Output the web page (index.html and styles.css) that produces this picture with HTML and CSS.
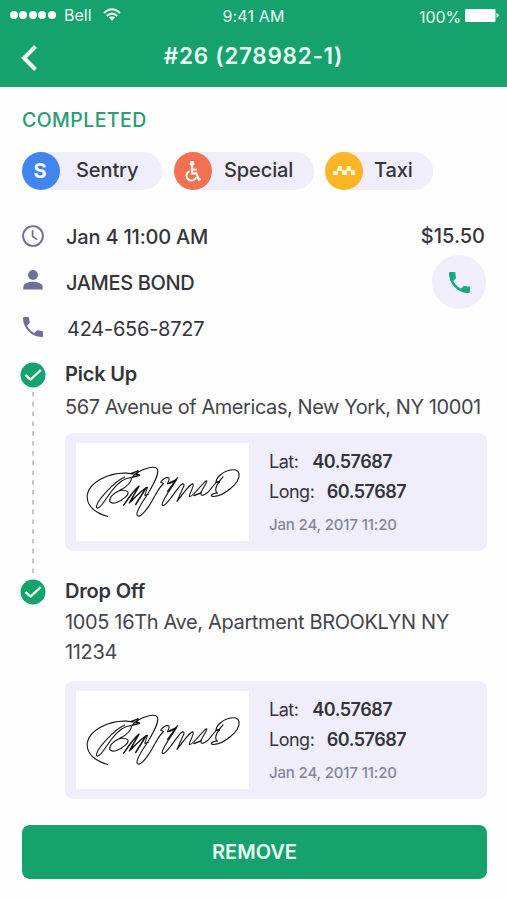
FILE: index.html
```html
<!DOCTYPE html>
<html lang="en">
<head>
<meta charset="utf-8">
<title>Trip #26</title>
<link rel="stylesheet" href="styles.css">
</head>
<body>
<svg class="defs" aria-hidden="true">
  <symbol id="phone" viewBox="3 3 18 18"><path d="M6.62 10.79c1.44 2.83 3.76 5.14 6.59 6.59l2.2-2.2c.27-.27.67-.36 1.02-.24 1.12.37 2.33.57 3.57.57.55 0 1 .45 1 1V20c0 .55-.45 1-1 1-9.39 0-17-7.61-17-17 0-.55.45-1 1-1h3.5c.55 0 1 .45 1 1 0 1.25.2 2.45.57 3.57.11.35.03.74-.25 1.02l-2.2 2.2z"/></symbol>
  <symbol id="check" viewBox="0 0 26 26"><circle cx="13" cy="13" r="12.5" fill="#16a26c"/><path d="M5.400 12.800 L10.500 17.700 L20.800 8" fill="none" stroke="#effff8" stroke-width="2.4"/></symbol>
  <symbol id="signature" viewBox="50 55 519 291">
    <g fill="none" stroke="#151515" stroke-width="3.3" stroke-linecap="round" stroke-linejoin="round">
      <path d="M145 274 C107 263 80 241 84 208 C90 173 147 141 202 144 L232 148"/>
      <path d="M196 156 C168 165 107 232 112 247 C118 258 142 218 158 196 C173 177 192 158 215 157 C220 165 205 186 180 196 C205 192 215 202 198 216 C180 232 158 240 151 228 C150 214 168 201 182 196"/>
      <path d="M222 152 C244 131 282 121 293 130 C302 143 284 174 270 198 C254 226 230 254 233 269 C240 282 256 261 271 239 C287 215 297 187 313 175 L304 171 C308 164 319 155 328 158 C334 164 320 176 326 176 C340 173 351 163 355 157 C344 180 303 229 309 240 C317 248 340 208 364 180 C374 171 377 178 370 190 L353 229 C367 211 390 177 400 176 C408 180 390 203 390 214 C400 217 420 184 440 167 C448 164 434 184 425 201 C422 217 438 210 449 198 L470 172"/>
    </g>
    <g fill="none" stroke="#151515" stroke-width="4.400" stroke-linecap="round" stroke-linejoin="round">
      <path d="M216 145 L236 137 L232 146 L241 150 L218 156"/>
      <path d="M193 240 C208 218 228 192 239 183 L210 233 C224 220 241 201 261 187 L229 238"/>
      <path d="M265 186 L256 211 L268 207" stroke-width="3"/>
      <path d="M328 174 L350 164 L325 199 M404 211 L425 203 M470 171 L480 170" />
      <path d="M491 155 C477 169 461 194 474 204 C462 202 449 213 461 214 C490 215 544 174 539 146 C535 126 496 131 475 158 C469 166 468 175 480 172" stroke-width="3.500"/>
    </g>
  </symbol>
</svg>

<header class="header">
  <div class="status">
    <div class="carrier">
      <span class="dots"><i></i><i></i><i></i><i></i><i></i></span>
      <span class="bell">Bell</span>
      <svg class="wifi" viewBox="0 0 18 13"><g fill="none" stroke="#e9fff5" stroke-width="2"><path d="M1 5 Q9 -2.4 17 5"/><path d="M3.8 8 Q9 3.2 14.2 8"/></g><path d="M5.8 9.5 Q9 6.9 12.2 9.5 L9 12.8Z" fill="#e9fff5"/></svg>
    </div>
    <span class="time">9:41 AM</span>
    <div class="power">
      <span class="percent">100%</span>
      <svg class="battery" viewBox="0 0 34 14"><rect width="30.5" height="13" rx="1.5" fill="#fff"/><path d="M31.5 4 Q36 6.5 31.5 9Z" fill="#fff"/></svg>
    </div>
  </div>
  <div class="nav">
    <svg class="back" viewBox="0 0 18 28"><path d="M15.500 2.5 L4 14 L15.500 25.5" fill="none" stroke="#f2fff9" stroke-width="4"/></svg>
    <h1 class="title">#26 (278982-1)</h1>
    <span></span>
  </div>
</header>

<main class="main">
  <div class="state">COMPLETED</div>
  <div class="tags">
    <div class="tag tag-sentry"><span class="badge blue">S</span><span class="label">Sentry</span></div>
    <div class="tag tag-special"><span class="badge orange"><svg class="chair" viewBox="0 0 18 22"><circle cx="8" cy="2.6" r="2.5" fill="#fff"/><g fill="none" stroke="#fff" stroke-width="2"><path d="M8 5 V13 H12.5 L15 19.5 L17 18.7" stroke-width="2.4"/><path d="M8 9 H13"/><path d="M5.3 10.5 A5.2 5.2 0 1 0 12.3 17"/></g></svg></span><span class="label">Special</span></div>
    <div class="tag tag-taxi"><span class="badge yellow"><svg class="checker" viewBox="0 0 22 10"><path fill="#fff6d8" d="M0 5h4v-2.5h1v-2.5h4v4h4v-1.500h1v-2.500h4v4h4v5h-4v-4h-4v4h-5v-4h-4v4h-5z"/></svg></span><span class="label">Taxi</span></div>
  </div>

  <section class="info">
    <div class="facts">
      <div class="fact"><svg class="clock" viewBox="0 0 22 22"><g fill="none" stroke="#706f9a"><circle cx="11" cy="11" r="9.9" stroke-width="1.9"/><path d="M10.600 5.200V11.500L15.200 14.600" stroke-width="1.700"/></g></svg><span class="date">Jan 4 11:00 AM</span></div>
      <div class="fact"><svg class="person" viewBox="0 0 20 20"><circle cx="10" cy="5" r="4.900"/><path d="M0.300 19.500V17C0.300 13.400 6 11.800 10 11.800S19.700 13.400 19.700 17V19.500Z"/></svg><span class="name">JAMES BOND</span></div>
      <div class="fact"><svg class="tel"><use href="#phone"/></svg><span class="number">424-656-8727</span></div>
    </div>
    <div class="side">
      <span class="price">$15.50</span>
      <div class="call"><svg><use href="#phone"/></svg></div>
    </div>
  </section>

  <section class="stop">
    <div class="rail"><svg class="mark"><use href="#check"/></svg><svg class="line" viewBox="0 0 2 182"><path d="M1 0V182" stroke="#c6c6cc" stroke-width="2" stroke-dasharray="4.600 5.200"/></svg></div>
    <div class="body">
      <h2 class="pick">Pick Up</h2>
      <p class="addr one">567 Avenue of Americas, New York, NY 10001</p>
      <div class="card">
        <div class="sign"><svg><use href="#signature"/></svg></div>
        <div class="coords">
          <div class="coord"><span class="lat">Lat:</span><b>40.57687</b></div>
          <div class="coord"><span class="long">Long:</span><b>60.57687</b></div>
          <div class="stamp">Jan 24, 2017 11:20</div>
        </div>
      </div>
    </div>
  </section>

  <section class="stop last">
    <div class="rail"><svg class="mark"><use href="#check"/></svg></div>
    <div class="body">
      <h2 class="drop">Drop Off</h2>
      <p class="addr two">1005 16Th Ave, Apartment BROOKLYN NY<br>11234</p>
      <div class="card">
        <div class="sign"><svg><use href="#signature"/></svg></div>
        <div class="coords">
          <div class="coord"><span class="lat">Lat:</span><b>40.57687</b></div>
          <div class="coord"><span class="long">Long:</span><b>60.57687</b></div>
          <div class="stamp">Jan 24, 2017 11:20</div>
        </div>
      </div>
    </div>
  </section>

  <button class="remove">REMOVE</button>
</main>
</body>
</html>
```

FILE: styles.css
```css
* { box-sizing: border-box; }
body { margin: 0; width: 507px; height: 900px; overflow: hidden; background: #fefefe; color: #34343c; font-family: Inter, "Liberation Sans", sans-serif; }
svg { display: block; flex: none; }
span, h1, h2, p, b { white-space: nowrap; }
h1, h2, p { margin: 0; }
.defs { display: none; }

.header { height: 87px; background: #16a26c; color: #eafff6; }
.status { display: grid; grid-template-columns: 1fr auto 1fr; height: 31px; align-items: center; padding: 0 8px 0 10px; font-size: 16px; }
.carrier { display: flex; align-items: center; height: 29px; margin-bottom: 3px; }
.dots { display: flex; gap: 1.400px; width: 46px; }
.dots i { width: 8px; height: 8px; border-radius: 50%; background: #fff; }
.bell { margin-left: 8px; }
.wifi { width: 18px; height: 13px; margin-left: 11px; }
.time { margin-top: -1px; margin-right: 2px; letter-spacing: 0.150px; }
.power { display: flex; justify-content: flex-end; align-items: center; }
.percent { margin: 2px 4px 0 0; letter-spacing: -0.100px; }
.battery { width: 34px; height: 14px; margin-top: -1px; }
.nav { display: grid; grid-template-columns: 1fr auto 1fr; height: 52px; align-items: center; padding: 0 20px; }
.back { width: 18px; height: 28px; margin-top: 1px; }
.title { margin-top: -2px; font-size: 22.500px; font-weight: 600; line-height: 28px; letter-spacing: 0.700px; }

.main { padding: 20px 20px 0 22px; }
.state { height: 26px; line-height: 27px; font-size: 19.500px; font-weight: 500; letter-spacing: 0.420px; color: #2a9d70; }
.tags { display: flex; gap: 12px; margin-top: 19px; }
.tag { display: flex; align-items: center; height: 38px; border-radius: 19px; background: #efeefa; font-size: 20px; font-weight: 500; }
.tag-sentry, .tag-special { width: 140px; }
.tag-taxi { width: 108px; margin-left: -1px; }
.badge { display: flex; align-items: center; justify-content: center; width: 38px; height: 38px; border-radius: 50%; flex: none; }
.blue { background: #4186ef; color: #fff; font-size: 20px; font-weight: 700; padding-right: 2px; }
.orange { background: #f27150; }
.yellow { background: #fcb525; }
.chair { width: 18px; height: 21px; }
.checker { width: 22px; height: 10px; margin-top: -1px; }
.label { margin-top: -2px; letter-spacing: -0.100px; }
.tag-sentry .label { margin-left: 16px; }
.tag-special .label { margin-left: 12px; }
.tag-taxi .label { margin-left: 11px; }

.info { display: flex; justify-content: space-between; margin-top: 23px; height: 142px; }
.facts { display: grid; grid-template-rows: 46px 46px 45px; height: 137px; font-size: 20px; }
.fact { display: flex; align-items: center; }
.fact svg { fill: #706f9a; }
.fact span { margin-top: 2px; margin-left: 22px; font-weight: 500; }
.date { letter-spacing: -0.200px; }
.name { letter-spacing: -0.350px; }
.number { letter-spacing: -0.250px; }
.clock { width: 22px; height: 22px; margin-top: -1px; }
.person { width: 20px; height: 20px; margin: -5px 1px 0; }
.tel { width: 20px; height: 20px; margin: -2px 1px 0; }
.fact .number { margin-left: 23px; font-weight: 400; }
.side { display: flex; flex-direction: column; align-items: flex-end; }
.price { height: 42px; line-height: 46px; margin-right: 2px; font-size: 20px; font-weight: 500; }
.call { display: flex; align-items: center; justify-content: center; width: 54px; height: 54px; margin-right: 1px; border-radius: 50%; background: #efeefa; }
.call svg { width: 21px; height: 21px; fill: #16a981; }

.stop { display: flex; margin-bottom: 21px; }
.last { margin-bottom: 0; }
.rail { width: 43px; padding-top: 7px; }
.mark { width: 26px; height: 26px; margin-left: -2px; }
.line { width: 2px; height: 182px; margin: 4px 0 -23px 10px; }
.body { width: 422px; }
.body h2 { height: 34px; line-height: 39px; font-size: 20px; font-weight: 600; letter-spacing: -0.200px; }
.addr { line-height: 30px; font-size: 20px; color: #45454c; }
.one { height: 44px; padding-top: 3px; letter-spacing: -0.430px; }
.two { height: 75px; padding-top: 1px; letter-spacing: -0.360px; }
.card { display: flex; height: 118px; padding: 10px 11px; border-radius: 8px; background: #efeefa; }
.sign { width: 173px; height: 98px; background: #fff; }
.sign svg { width: 173px; height: 98px; }
.coords { margin-left: 20px; padding-top: 4px; }
.coord { display: flex; height: 30px; line-height: 30px; font-size: 18px; letter-spacing: -0.500px; }
.coord b { font-weight: 600; }
.lat { margin-right: 14px; }
.long { margin-right: 12.500px; }
.stamp { height: 20px; margin-top: 8px; line-height: 20px; font-size: 15px; font-weight: 500; letter-spacing: -0.150px; color: #85849f; white-space: nowrap; }
.remove { display: block; width: 465px; height: 54px; margin-top: 26px; border: 0; border-radius: 8px; background: #16a26c; color: #e9fff5; font-family: inherit; font-size: 20px; font-weight: 600; }
```
